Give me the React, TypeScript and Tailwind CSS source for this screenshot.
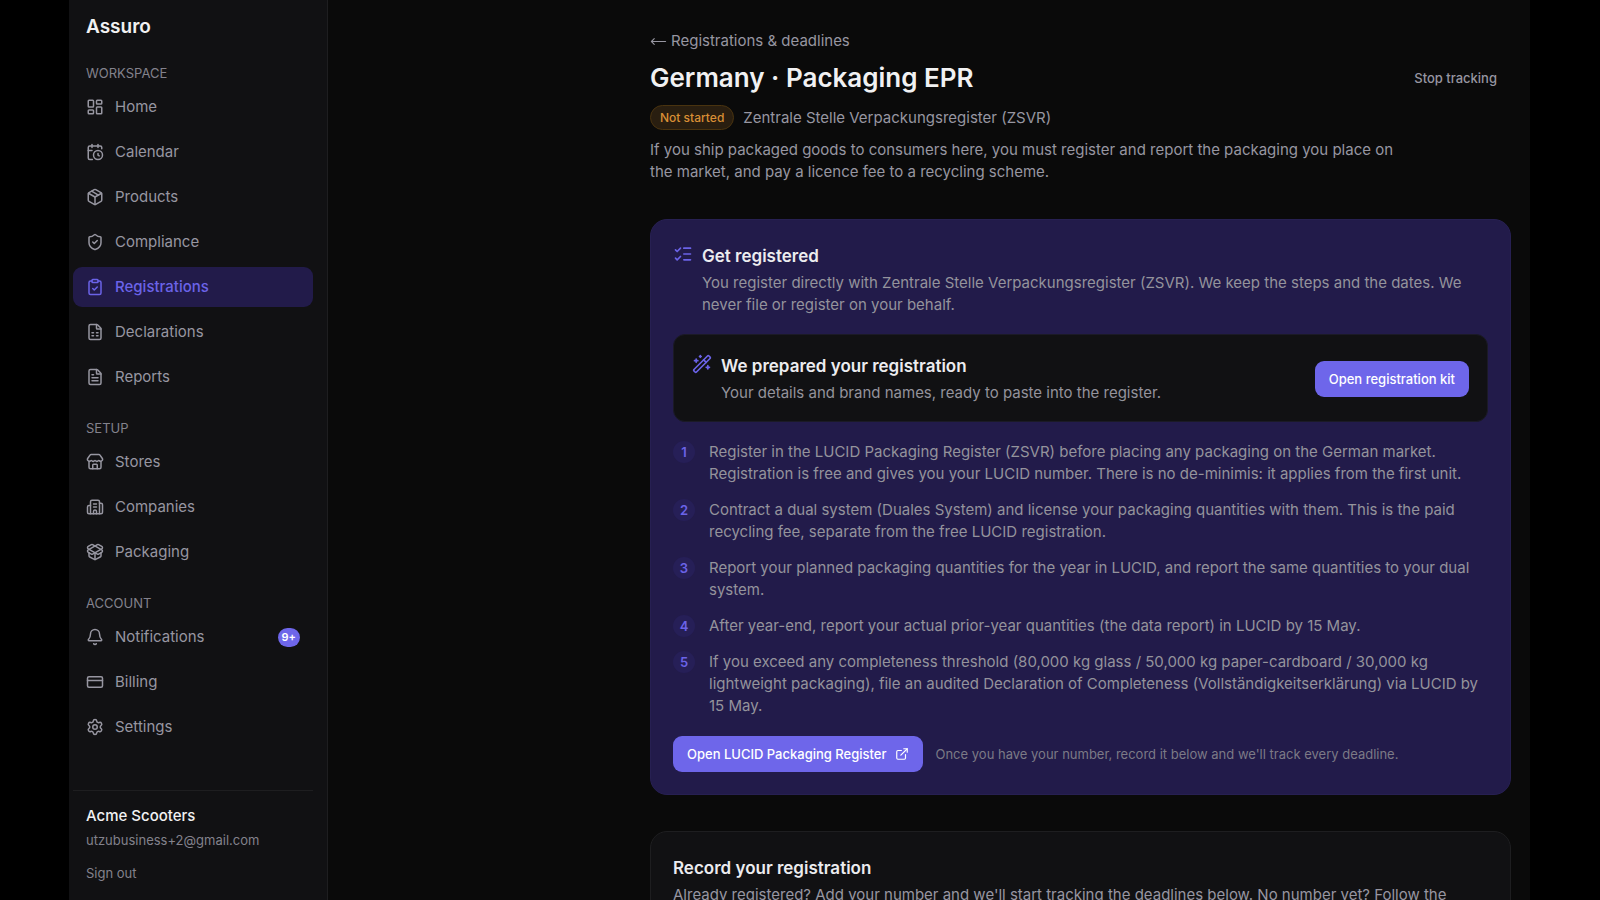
import type { ReactNode } from 'react';
import {
  Bell,
  Building2,
  CalendarClock,
  ClipboardCheck,
  CreditCard,
  ExternalLink,
  FileSpreadsheet,
  FileText,
  LayoutDashboard,
  ListChecks,
  type LucideIcon,
  MoveLeft,
  Package,
  PackageOpen,
  Settings,
  ShieldCheck,
  Store,
  WandSparkles,
} from 'lucide-react';

type NavItem = { label: string; icon: LucideIcon; active?: boolean; badge?: string };

const sections: { title: string; items: NavItem[] }[] = [
  {
    title: 'WORKSPACE',
    items: [
      { label: 'Home', icon: LayoutDashboard },
      { label: 'Calendar', icon: CalendarClock },
      { label: 'Products', icon: Package },
      { label: 'Compliance', icon: ShieldCheck },
      { label: 'Registrations', icon: ClipboardCheck, active: true },
      { label: 'Declarations', icon: FileSpreadsheet },
      { label: 'Reports', icon: FileText },
    ],
  },
  {
    title: 'SETUP',
    items: [
      { label: 'Stores', icon: Store },
      { label: 'Companies', icon: Building2 },
      { label: 'Packaging', icon: PackageOpen },
    ],
  },
  {
    title: 'ACCOUNT',
    items: [
      { label: 'Notifications', icon: Bell, badge: '9+' },
      { label: 'Billing', icon: CreditCard },
      { label: 'Settings', icon: Settings },
    ],
  },
];

const steps = [
  'Register in the LUCID Packaging Register (ZSVR) before placing any packaging on the German market. Registration is free and gives you your LUCID number. There is no de-minimis: it applies from the first unit.',
  'Contract a dual system (Duales System) and license your packaging quantities with them. This is the paid recycling fee, separate from the free LUCID registration.',
  'Report your planned packaging quantities for the year in LUCID, and report the same quantities to your dual system.',
  'After year-end, report your actual prior-year quantities (the data report) in LUCID by 15 May.',
  'If you exceed any completeness threshold (80,000 kg glass / 50,000 kg paper-cardboard / 30,000 kg lightweight packaging), file an audited Declaration of Completeness (Vollständigkeitserklärung) via LUCID by 15 May.',
];

function NavLink({ label, icon: Icon, active, badge }: NavItem) {
  return (
    <li>
      <a
        href="#"
        aria-current={active ? 'page' : undefined}
        className={`flex h-10 items-center gap-[11px] rounded-[9px] px-[13px] ${
          active ? 'bg-[#221b4a] font-medium text-[#6b63e8]' : 'text-[#9796a1]'
        }`}
      >
        <Icon size={18} strokeWidth={2} />
        <span className="flex-1">{label}</span>
        {badge && (
          <span className="flex h-[19px] items-center rounded-full bg-[#6e66ea] px-1 text-[11px] font-semibold text-white">
            {badge}
          </span>
        )}
      </a>
    </li>
  );
}

function Sidebar() {
  return (
    <aside className="sticky top-0 flex h-screen w-[259px] shrink-0 flex-col border-r border-[#1e1e20] bg-[#111113] pr-[14px] pl-1">
      <p className="mt-[13px] px-[13px] text-[19px] leading-[28px] font-semibold text-[#f1f1f2]">Assuro</p>
      <nav className="mt-[23px] flex flex-col gap-[22px]">
        {sections.map((section) => (
          <section key={section.title}>
            <h2 className="mb-[5px] px-[13px] text-[13px] leading-[18px] text-[#83828c]">{section.title}</h2>
            <ul className="flex flex-col gap-[5px]">
              {section.items.map((item) => (
                <NavLink key={item.label} {...item} />
              ))}
            </ul>
          </section>
        ))}
      </nav>
      <div className="mt-auto border-t border-[#1e1e20] px-[13px] pt-[13px] pb-[18px]">
        <p className="leading-[24px] font-medium text-[#f1f1f2]">Acme Scooters</p>
        <p className="mt-[3px] text-[13px] leading-[18px] text-[#83828c]">utzubusiness+2@gmail.com</p>
        <button type="button" className="mt-[15px] block text-[13px] leading-[18px] text-[#83828c]">
          Sign out
        </button>
      </div>
    </aside>
  );
}

function IconHeading({ icon: Icon, title, children }: { icon: LucideIcon; title: string; children: ReactNode }) {
  return (
    <div className="flex gap-[9px]">
      <Icon size={20} className="mt-[1px] shrink-0 text-[#6b63e8]" />
      <div>
        <h2 className="text-[17px] leading-[26px] font-semibold text-[#ececef]">{title}</h2>
        <p className="mt-[3px]">{children}</p>
      </div>
    </div>
  );
}

export default function App() {
  return (
    <div className="min-h-screen bg-black pr-[70px] pl-[69px] font-[Inter,sans-serif] text-[15px] leading-[22px] text-[#9796a1]">
      <div className="flex h-screen overflow-hidden bg-[#0a0a0a]">
        <Sidebar />

        <main className="flex-1 pt-[30px] pr-[19px]">
          <div className="ml-auto max-w-[861px]">
            {/* Page header */}
            <header>
              <a href="#" className="flex items-center gap-1">
                <MoveLeft size={17} strokeWidth={1.5} />
                Registrations &amp; deadlines
              </a>
              <div className="mt-2 flex items-center justify-between">
                <h1 className="text-[26px] leading-[36px] font-semibold text-[#f1f1f2]">Germany · Packaging EPR</h1>
                <button type="button" className="px-[14px] text-[13px] font-medium">
                  Stop tracking
                </button>
              </div>
              <div className="mt-[9px] flex items-center gap-[9px]">
                <span className="rounded-full border border-[#49330f] bg-[#291e10] px-[9px] text-[12px] leading-[23px] font-medium text-[#d98f35]">
                  Not started
                </span>
                <span>Zentrale Stelle Verpackungsregister (ZSVR)</span>
              </div>
              <p className="mt-[9px] max-w-[753px]">
                If you ship packaged goods to consumers here, you must register and report the packaging you place on
                the market, and pay a licence fee to a recycling scheme.
              </p>
            </header>

            {/* Registration steps */}
            <section className="mt-9 rounded-[17px] border border-[#272052] bg-[#221b4a] px-[22px] pt-[23px] pb-[22px] text-[#94939c]">
              <IconHeading icon={ListChecks} title="Get registered">
                You register directly with Zentrale Stelle Verpackungsregister (ZSVR). We keep the steps and the dates.
                We never file or register on your behalf.
              </IconHeading>

              <div className="mt-[18px] flex items-center justify-between rounded-[12px] border border-[#1b1a26] bg-[#111113] px-[18px] pt-[18px] pb-[17px]">
                <IconHeading icon={WandSparkles} title="We prepared your registration">
                  Your details and brand names, ready to paste into the register.
                </IconHeading>
                <button
                  type="button"
                  className="h-9 rounded-[9px] bg-[#6e66ea] px-[14px] text-[13px] font-medium text-white"
                >
                  Open registration kit
                </button>
              </div>

              <ol className="mt-[19px] flex flex-col gap-[14px]">
                {steps.map((step, i) => (
                  <li key={step} className="flex gap-[14px]">
                    <span className="flex size-[22px] shrink-0 items-center justify-center rounded-full bg-[#261f57] text-[13px] font-semibold text-[#6b63e8]">
                      {i + 1}
                    </span>
                    <span>{step}</span>
                  </li>
                ))}
              </ol>

              <div className="mt-[19px] flex items-center gap-[13px]">
                <a
                  href="#"
                  className="flex h-9 items-center gap-2 rounded-[9px] bg-[#6e66ea] px-[14px] text-[13px] font-medium text-white"
                >
                  Open LUCID Packaging Register
                  <ExternalLink size={14} />
                </a>
                <p className="text-[13px] text-[#7c7a86]">
                  Once you have your number, record it below and we'll track every deadline.
                </p>
              </div>
            </section>

            {/* Registration record */}
            <section className="mt-9 rounded-[17px] border border-[#1e1e20] bg-[#111113] px-[22px] pt-[23px] pb-[22px]">
              <h2 className="text-[17px] leading-[26px] font-semibold text-[#ececef]">Record your registration</h2>
              <p className="mt-[3px]">
                Already registered? Add your number and we'll start tracking the deadlines below. No number yet? Follow
                the
              </p>
            </section>
          </div>
        </main>
      </div>
    </div>
  );
}
